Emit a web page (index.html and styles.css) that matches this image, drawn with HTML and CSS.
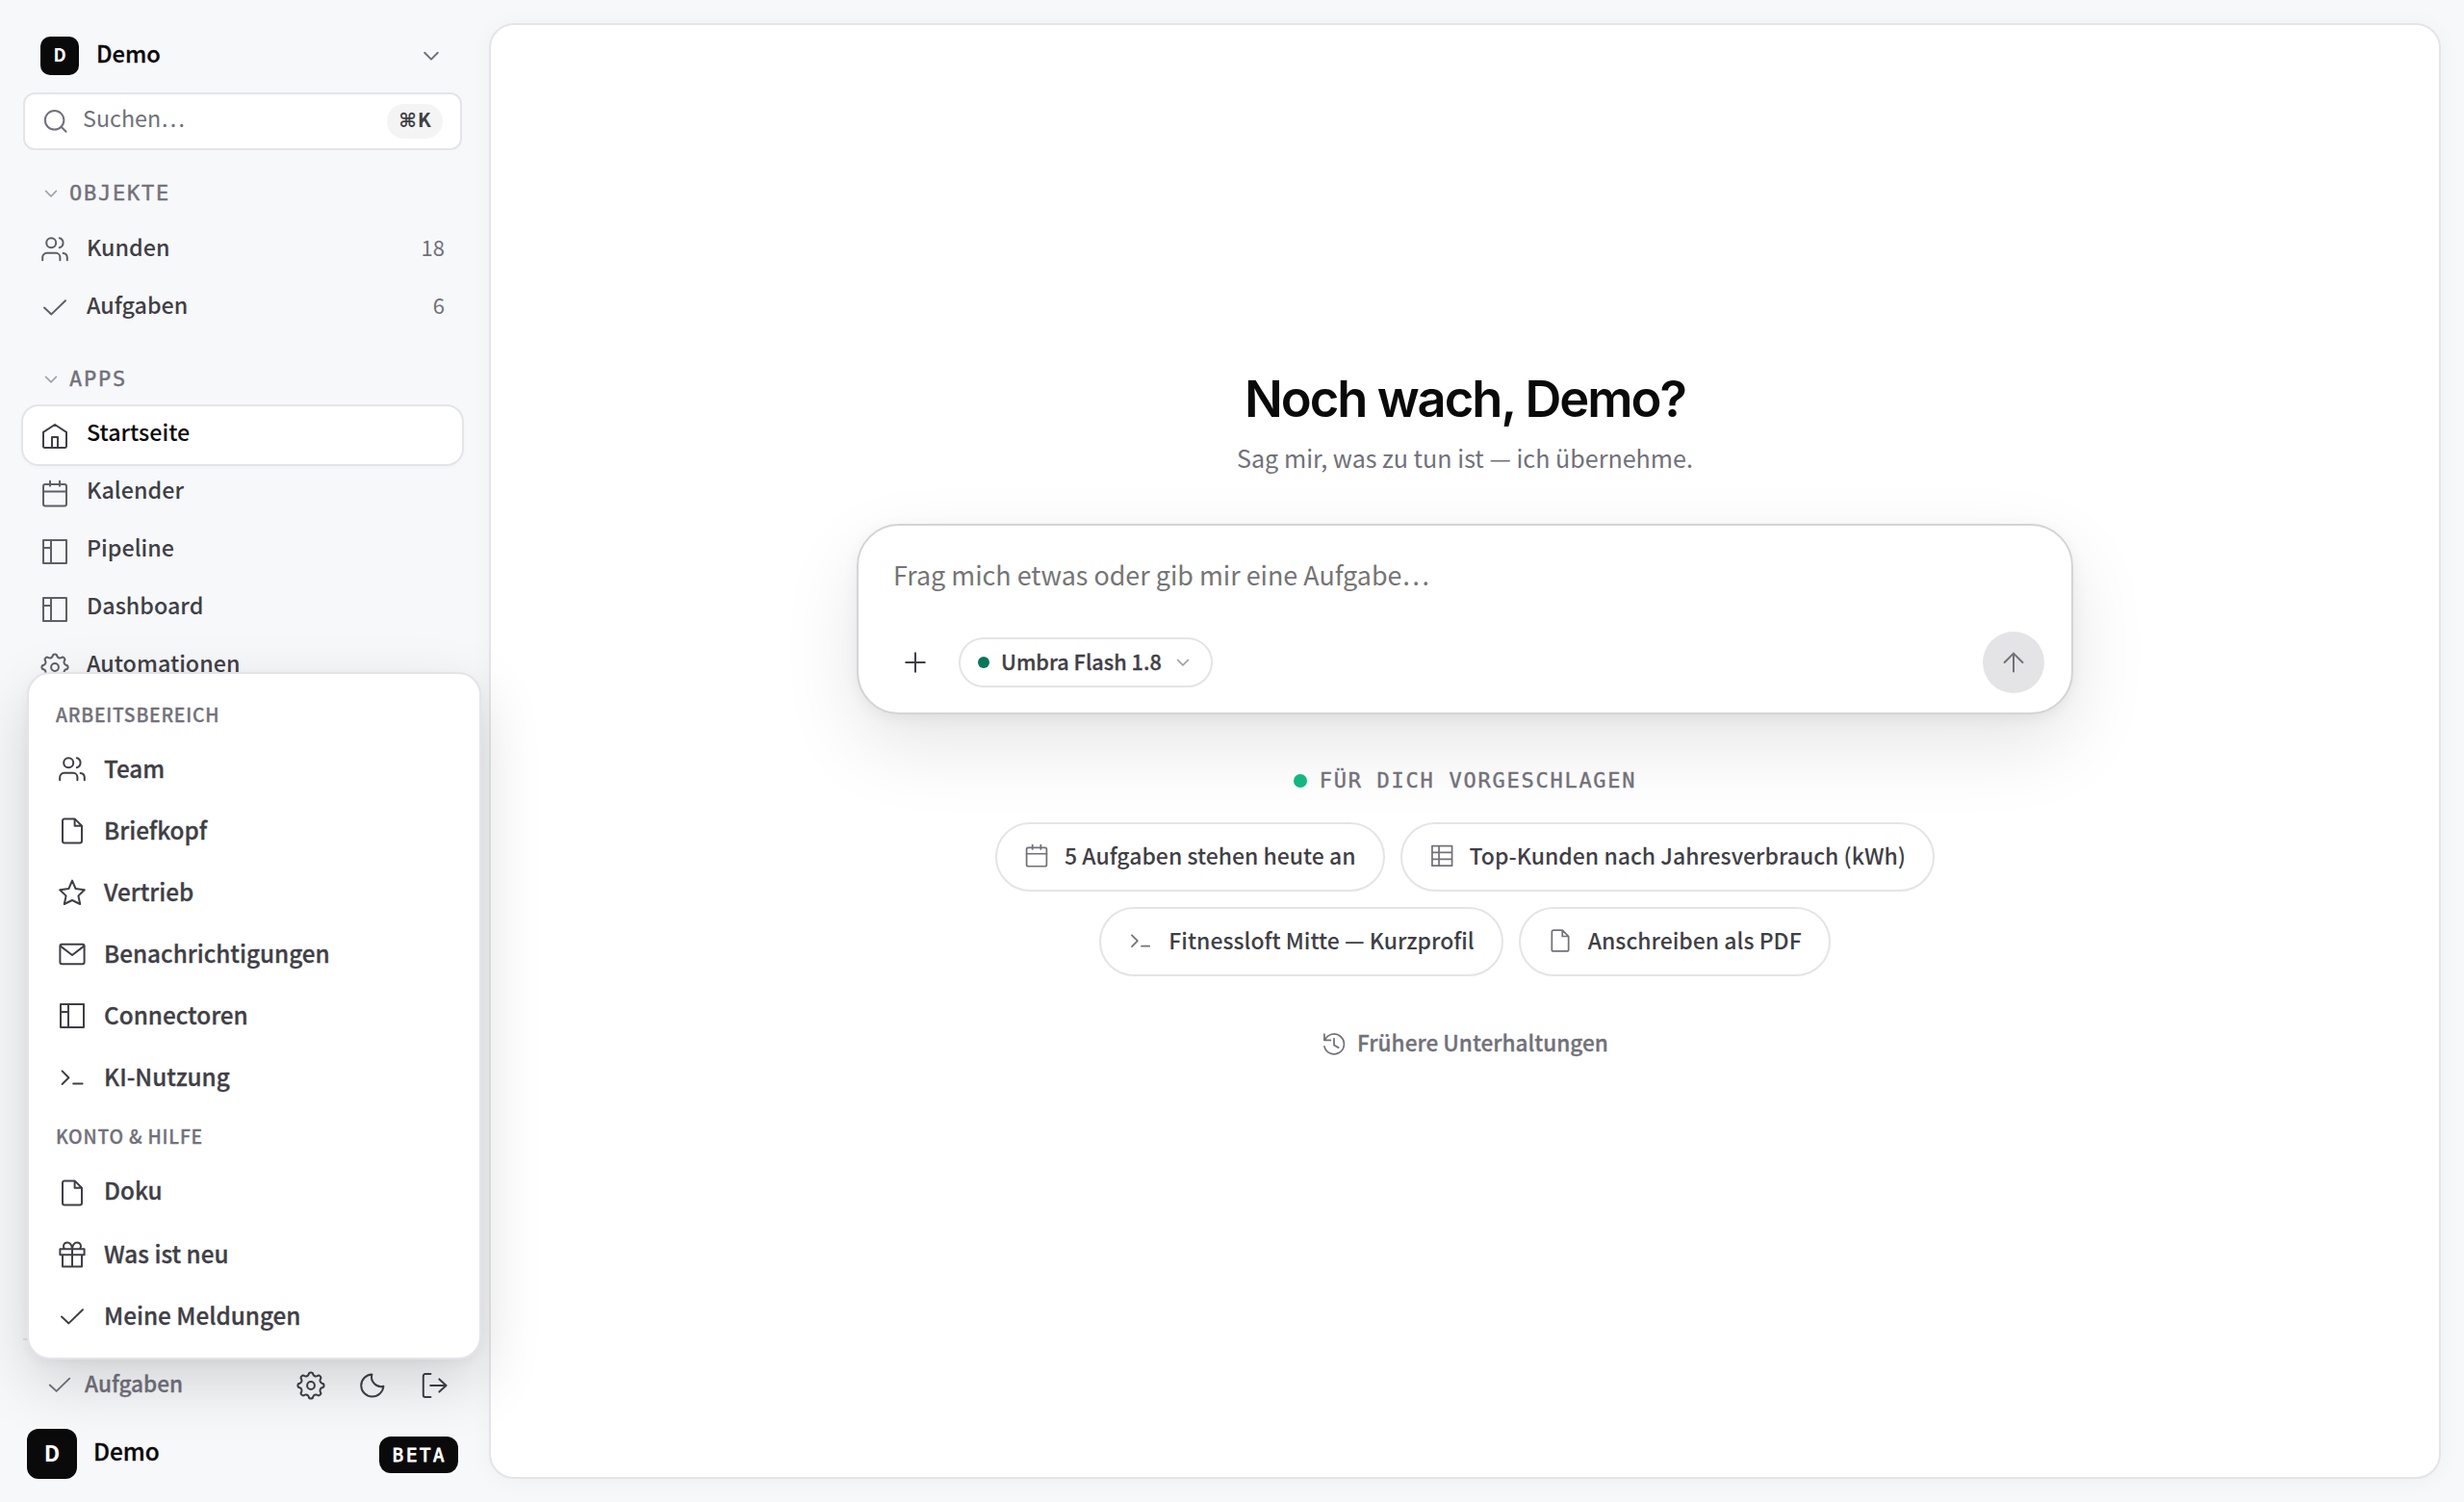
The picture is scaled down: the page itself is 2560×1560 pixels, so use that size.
FILE: index.html
```
<!DOCTYPE html>
<html lang="de">
<head>
  <meta charset="UTF-8">
  <meta name="viewport" content="width=device-width, initial-scale=1.0">
  <title>Demo – Startseite</title>
  <link rel="stylesheet" href="styles.css">
</head>
<body>
  <!-- Icon sprite, 15px grid -->
  <svg class="sprite" aria-hidden="true">
    <symbol id="i-chevron" viewBox="0 0 15 15"><path d="M4.1 5.9l3.4 3.4 3.4-3.4"/></symbol>
    <symbol id="i-search" viewBox="0 0 15 15"><circle cx="7.3" cy="6.9" r="4.9"/><path d="M10.8 10.4l2.5 2.5"/></symbol>
    <symbol id="i-users" viewBox="0 0 15 15"><circle cx="5.6" cy="4.1" r="2.5"/><path d="M1.1 13.1v-1.5a2.2 2.2 0 012.2-2.2h4.7a2.2 2.2 0 012.2 2.2v1.5M9.9 1.6a2.6 2.6 0 010 5M11.8 9.5a2.3 2.3 0 012.1 2.2v1.4"/></symbol>
    <symbol id="i-check" viewBox="0 0 15 15"><path d="M2 7.8l3.7 3.4L13 4.1"/></symbol>
    <symbol id="i-home" viewBox="0 0 15 15"><path d="M1.5 12.8V5.4l6-3.9 6 3.9v7.4a.7.7 0 01-.7.7H2.2a.7.7 0 01-.7-.7zM6 13.5V8h3v5.5"/></symbol>
    <symbol id="i-calendar" viewBox="0 0 15 15"><rect x="1.5" y="2.5" width="12" height="11.2" rx="1"/><path d="M1.5 6.2h12M5 .9v2.5M10 .9v2.5"/></symbol>
    <symbol id="i-layout" viewBox="0 0 15 15"><path d="M1.5 1.5h12v12h-12zM5.5 1.5v12M1.5 5.5h4"/></symbol>
    <symbol id="i-gear" viewBox="0 0 15 15"><circle cx="7.5" cy="7.5" r="1.95"/><path d="M6.35 1.71A1.16 1.16 0 018.65 1.71 1.5 1.5 0 0010.78 2.59 1.16 1.16 0 0112.41 4.22 1.5 1.5 0 0013.29 6.35 1.16 1.16 0 0113.29 8.65 1.5 1.5 0 0012.41 10.78 1.16 1.16 0 0110.78 12.41 1.5 1.5 0 008.65 13.29 1.16 1.16 0 016.35 13.29 1.5 1.5 0 004.22 12.41 1.16 1.16 0 012.59 10.78 1.5 1.5 0 001.71 8.65 1.16 1.16 0 011.71 6.35 1.5 1.5 0 002.59 4.22 1.16 1.16 0 014.22 2.59 1.5 1.5 0 006.35 1.71z"/></symbol>
    <symbol id="i-file" viewBox="0 0 15 15"><path d="M8.8 1.2H3.5a1 1 0 00-1 1v10.6a1 1 0 001 1h8a1 1 0 001-1V4.9zM8.8 1.2v3.7h3.7"/></symbol>
    <symbol id="i-star" viewBox="0 0 15 15"><path d="M7.5 1.3l1.8 4.2 4.6.6-3.2 3.1.9 4.3-4.1-2-4.1 2 .9-4.3-3.2-3.1 4.6-.6z"/></symbol>
    <symbol id="i-mail" viewBox="0 0 15 15"><rect x="1.2" y="2.4" width="12.6" height="10.2" rx="1"/><path d="M1.4 3.3l6.1 4.7 6.1-4.7"/></symbol>
    <symbol id="i-terminal" viewBox="0 0 15 15"><path d="M2.3 4.2l3.4 3.4-3.4 3.4M8.1 10.8h4.7"/></symbol>
    <symbol id="i-gift" viewBox="0 0 15 15"><path d="M1.2 4.6h12.6v3H1.2zM2.5 7.6h10v6.2h-10zM7.5 4.6v9.2M7.5 4.6C7.3 2.5 6.3 1.2 4.9 1.2c-1.7 0-2.5 1.9-1.4 3.4M7.5 4.6c.2-2.1 1.2-3.4 2.6-3.4 1.7 0 2.5 1.9 1.4 3.4"/></symbol>
    <symbol id="i-moon" viewBox="0 0 15 15"><path d="M7.2 1.7A5.8 5.8 0 1013.2 7.9 5 5 0 017.2 1.7z"/></symbol>
    <symbol id="i-logout" viewBox="0 0 15 15"><path d="M5.7 1.5H2.9a1 1 0 00-1 1v10a1 1 0 001 1h2.8M5.6 7.5h8.2M10.2 4.2l3.6 3.3-3.6 3.3"/></symbol>
    <symbol id="i-plus" viewBox="0 0 15 15"><path d="M7.5 2.6v9.8M2.6 7.5h9.8"/></symbol>
    <symbol id="i-arrow-up" viewBox="0 0 15 15"><path d="M7.5 12.3V2.8M2.8 7.5l4.7-4.7 4.7 4.7"/></symbol>
    <symbol id="i-table" viewBox="0 0 15 15"><path d="M1.7 1.5h11.9v11.9H1.7zM1.7 5.4h11.9M1.7 9.4h11.9M5.8 1.5v11.9"/></symbol>
    <symbol id="i-history" viewBox="0 0 15 15"><path d="M1.7 1.2v3.6h3.7M2 4.8A6 6 0 111.7 8.6M7.5 3.8v4l2.7 1.5"/></symbol>
  </svg>

  <div class="app">
    <aside class="sidebar">
      <div class="workspace">
        <span class="avatar avatar-sm"><span>D</span></span>
        <span class="workspace-name">Demo</span>
        <svg class="icon"><use href="#i-chevron"/></svg>
      </div>

      <div class="search">
        <svg class="icon"><use href="#i-search"/></svg>
        <span class="search-text">Suchen…</span>
        <kbd class="kbd"><span class="cmd">⌘</span><span class="key">K</span></kbd>
      </div>

      <nav class="nav">
        <div class="section-label section-objects">
          <svg class="icon icon-chev"><use href="#i-chevron"/></svg>OBJEKTE
        </div>
        <div class="objects">
          <a class="nav-item"><svg class="icon"><use href="#i-users"/></svg><span class="nav-text">Kunden</span><span class="count">18</span></a>
          <a class="nav-item"><svg class="icon"><use href="#i-check"/></svg><span class="nav-text">Aufgaben</span><span class="count">6</span></a>
        </div>

        <div class="section-label">
          <svg class="icon icon-chev"><use href="#i-chevron"/></svg>APPS
        </div>
        <div class="apps">
          <a class="nav-item active"><svg class="icon"><use href="#i-home"/></svg><span class="nav-text">Startseite</span></a>
          <a class="nav-item"><svg class="icon"><use href="#i-calendar"/></svg><span class="nav-text">Kalender</span></a>
          <a class="nav-item"><svg class="icon"><use href="#i-layout"/></svg><span class="nav-text">Pipeline</span></a>
          <a class="nav-item"><svg class="icon"><use href="#i-layout"/></svg><span class="nav-text">Dashboard</span></a>
          <a class="nav-item"><svg class="icon"><use href="#i-gear"/></svg><span class="nav-text">Automationen</span></a>
        </div>
      </nav>

      <div class="tools">
        <svg class="icon icon-tasks"><use href="#i-check"/></svg>
        <span class="tools-text">Aufgaben</span>
        <svg class="icon"><use href="#i-gear"/></svg>
        <svg class="icon"><use href="#i-moon"/></svg>
        <svg class="icon"><use href="#i-logout"/></svg>
      </div>
      <div class="account">
        <span class="avatar avatar-lg"><span>D</span></span>
        <span class="account-name">Demo</span>
        <span class="beta">BETA</span>
      </div>

      <div class="menu">
        <div class="menu-label menu-label-first">ARBEITSBEREICH</div>
        <a class="menu-item"><svg class="icon"><use href="#i-users"/></svg><span>Team</span></a>
        <a class="menu-item"><svg class="icon"><use href="#i-file"/></svg><span>Briefkopf</span></a>
        <a class="menu-item"><svg class="icon"><use href="#i-star"/></svg><span>Vertrieb</span></a>
        <a class="menu-item"><svg class="icon"><use href="#i-mail"/></svg><span>Benachrichtigungen</span></a>
        <a class="menu-item"><svg class="icon"><use href="#i-layout"/></svg><span>Connectoren</span></a>
        <a class="menu-item"><svg class="icon"><use href="#i-terminal"/></svg><span>KI-Nutzung</span></a>
        <div class="menu-label">KONTO &amp; HILFE</div>
        <a class="menu-item menu-item-link"><svg class="icon"><use href="#i-file"/></svg><span>Doku</span></a>
        <a class="menu-item"><svg class="icon"><use href="#i-gift"/></svg><span>Was ist neu</span></a>
        <a class="menu-item"><svg class="icon"><use href="#i-check"/></svg><span>Meine Meldungen</span></a>
      </div>
    </aside>

    <main class="panel">
      <h1 class="greeting">Noch wach, Demo?</h1>
      <p class="subtitle">Sag mir, was zu tun ist — ich übernehme.</p>

      <div class="composer">
        <div class="placeholder">Frag mich etwas oder gib mir eine Aufgabe…</div>
        <div class="toolbar">
          <svg class="icon"><use href="#i-plus"/></svg>
          <div class="model">
            <span class="model-dot"></span>
            <span class="model-name">Umbra Flash 1.8</span>
            <svg class="icon icon-chev"><use href="#i-chevron"/></svg>
          </div>
          <button class="send"><svg class="icon"><use href="#i-arrow-up"/></svg></button>
        </div>
      </div>

      <div class="suggest-label"><span class="suggest-dot"></span>FÜR DICH VORGESCHLAGEN</div>
      <div class="chips">
        <a class="chip"><svg class="icon"><use href="#i-calendar"/></svg><span>5 Aufgaben stehen heute an</span></a>
        <a class="chip"><svg class="icon"><use href="#i-table"/></svg><span>Top-Kunden nach Jahresverbrauch (kWh)</span></a>
        <a class="chip"><svg class="icon"><use href="#i-terminal"/></svg><span>Fitnessloft Mitte — Kurzprofil</span></a>
        <a class="chip"><svg class="icon"><use href="#i-file"/></svg><span>Anschreiben als PDF</span></a>
      </div>
      <div class="history"><svg class="icon"><use href="#i-history"/></svg><span>Frühere Unterhaltungen</span></div>
    </main>
  </div>
</body>
</html>
```
FILE: styles.css
```
* {
  box-sizing: border-box;
}
body {
  margin: 0;
  background: #f7f8fa;
  color: #3f3f46;
  font-family: "Noto Sans CJK SC", "Noto Sans", sans-serif;
  font-size: 23.3px;
  font-weight: 500;
  line-height: 36px;
}
.sprite {
  position: absolute;
  width: 0;
  height: 0;
}
.icon {
  width: 30px;
  height: 30px;
  flex: none;
  fill: none;
  stroke: currentColor;
  stroke-width: 1;
  stroke-linecap: round;
  stroke-linejoin: round;
}
.icon-chev {
  width: 24px;
  height: 24px;
  color: #a1a1aa;
}
.app {
  display: flex;
  width: 2560px;
  height: 1560px;
  overflow: hidden;
}

/* Sidebar */
.sidebar {
  position: relative;
  z-index: 1;
  display: flex;
  flex-direction: column;
  width: 508px;
  padding: 24px 28px 24px 24px;
}
.workspace {
  display: flex;
  align-items: center;
  height: 68px;
  margin-bottom: 4px;
  padding: 0 17px 0 18px;
  color: #71717a;
}
.workspace-name {
  flex: 1;
  margin-left: 18px;
  padding-bottom: 7px;
  color: #0a0a0a;
  font-size: 23.7px;
  -webkit-text-stroke: 0.3px;
}
.avatar {
  display: flex;
  align-items: center;
  justify-content: center;
  flex: none;
  background: #0a0a0a;
  color: #fff;
  font-weight: 700;
}
.avatar span {
  padding-bottom: 4px;
}
.avatar-sm {
  width: 40px;
  height: 40px;
  border-radius: 10px;
  font-size: 18.5px;
}
.avatar-lg {
  width: 52px;
  height: 52px;
  border-radius: 12px;
  font-size: 23px;
}
.search {
  display: flex;
  align-items: center;
  height: 60px;
  padding: 0 18px 0 16px;
  background: #fff;
  border: 2px solid #e4e4e9;
  border-radius: 12px;
  color: #71717a;
}
.search-text {
  flex: 1;
  margin-left: 14px;
  padding-bottom: 8px;
  font-size: 23.3px;
  font-weight: 400;
}
.kbd {
  display: flex;
  align-items: center;
  justify-content: center;
  width: 58px;
  height: 36px;
  background: #f4f4f5;
  border-radius: 18px;
  color: #3f3f46;
  font-family: inherit;
  font-size: 20px;
  font-weight: 700;
}
.cmd {
  font-family: "DejaVu Sans", sans-serif;
  font-size: 20px;
  padding-bottom: 3px;
}
.key {
  margin-left: 1px;
  padding-bottom: 5px;
}
.nav {
  flex: 1;
  min-height: 0;
}
.section-label {
  display: flex;
  align-items: center;
  gap: 7px;
  height: 56px;
  margin-top: 16px;
  padding-left: 17px;
  color: #71717a;
  font-family: "DejaVu Sans Mono", monospace;
  font-size: 22px;
  font-weight: 400;
  letter-spacing: 1.76px;
  -webkit-text-stroke: 0.4px;
}
.section-objects {
  height: 58px;
}
.nav-item {
  display: flex;
  align-items: center;
  height: 60px;
  padding: 0 18px;
}
.nav-item .icon {
  color: #5f5f67;
}
.objects .icon {
  margin-top: -2px;
}
.apps .icon {
  margin-top: 2px;
}
.nav-text {
  flex: 1;
  margin-left: 18px;
  padding-bottom: 8px;
}
.count {
  padding-bottom: 8px;
  color: #71717a;
  font-size: 22px;
  font-weight: 400;
}
.nav-item.active {
  background: #fff;
  border-radius: 16px;
  box-shadow: 0 0 0 2px #e4e4e9, 0 2px 6px rgba(0, 0, 0, 0.04);
  color: #0a0a0a;
}
.nav-item.active .icon {
  color: #3f3f46;
}
.tools {
  display: flex;
  align-items: center;
  gap: 34px;
  height: 94px;
  padding: 2px 14px 0 24px;
  border-top: 2px solid #e4e4e9;
}
.icon-tasks {
  width: 28px;
  height: 28px;
  margin: -3px -22px 0 0;
  color: #71717a;
}
.tools-text {
  flex: 1;
  padding-bottom: 4px;
  color: #71717a;
  font-size: 22.6px;
  -webkit-text-stroke: 0.3px;
}
.account {
  display: flex;
  align-items: center;
  height: 52px;
  padding: 0 4px;
}
.account-name {
  flex: 1;
  margin-left: 17px;
  padding-bottom: 6px;
  color: #0a0a0a;
  font-size: 24.4px;
  -webkit-text-stroke: 0.3px;
}
.beta {
  height: 38px;
  margin-top: 2px;
  padding: 0 12px 0 14px;
  background: #0a0a0a;
  border-radius: 12px;
  color: #fff;
  font-family: "DejaVu Sans Mono", monospace;
  font-size: 19px;
  font-weight: 400;
  line-height: 38px;
  letter-spacing: 2.6px;
  -webkit-text-stroke: 0.8px;
}

/* Popup over the lower sidebar */
.menu {
  position: absolute;
  left: 28px;
  bottom: 148px;
  width: 472px;
  padding: 11px 0;
  background: #fff;
  border: 2px solid #e4e4e9;
  border-radius: 24px;
  box-shadow: 0 24px 64px rgba(0, 0, 0, 0.15), 0 4px 12px rgba(0, 0, 0, 0.04);
}
.menu-label {
  height: 56px;
  padding-left: 28px;
  color: #71717a;
  font-size: 19.3px;
  line-height: 59px;
  letter-spacing: 0.8px;
  -webkit-text-stroke: 0.3px;
}
.menu-label-first {
  line-height: 63px;
}
.menu-item {
  display: flex;
  align-items: center;
  gap: 18px;
  height: 64px;
  padding-left: 30px;
  font-size: 24.3px;
  -webkit-text-stroke: 0.3px;
}
.menu-item span {
  padding-bottom: 2px;
}
.menu-item-link span {
  padding-bottom: 6px;
}

/* Main panel */
.panel {
  display: flex;
  flex-direction: column;
  align-items: center;
  width: 2028px;
  height: 1512px;
  margin-top: 24px;
  padding-top: 358px;
  background: #fff;
  border: 2px solid #e4e4e9;
  border-radius: 26px;
  box-shadow: 0 2px 24px rgba(0, 0, 0, 0.04);
}
.greeting {
  margin: 0;
  color: #0a0a0a;
  font-family: Inter, sans-serif;
  font-size: 52.5px;
  font-weight: 600;
  line-height: 60px;
  letter-spacing: -2px;
}
.subtitle {
  margin: 13px 0 51px;
  color: #71717a;
  font-size: 25.1px;
  font-weight: 400;
}
.composer {
  display: flex;
  flex-direction: column;
  justify-content: space-between;
  width: 1264px;
  height: 198px;
  padding: 31px 28px 20px 36px;
  background: #fff;
  border: 2px solid #d4d4d8;
  border-radius: 44px;
  box-shadow: 0 32px 80px rgba(0, 0, 0, 0.1), 0 4px 16px rgba(0, 0, 0, 0.06);
}
.placeholder {
  color: #757575;
  font-size: 26.9px;
  font-weight: 400;
  line-height: 40px;
}
.toolbar {
  display: flex;
  align-items: center;
  padding-left: 8px;
}
.model {
  display: flex;
  align-items: center;
  height: 52px;
  margin-left: 30px;
  padding: 0 17px 0 18px;
  border: 2px solid #e4e4e9;
  border-radius: 26px;
}
.model-dot {
  width: 12px;
  height: 12px;
  background: #047857;
  border-radius: 50%;
}
.model-name {
  margin: 0 10px 0 12px;
  padding-bottom: 3px;
  font-size: 21.7px;
  -webkit-text-stroke: 0.3px;
}
.send {
  display: flex;
  align-items: center;
  justify-content: center;
  width: 64px;
  height: 64px;
  margin-left: auto;
  padding: 0;
  background: #e4e4e6;
  border: 0;
  border-radius: 50%;
  color: #71717a;
}
.suggest-label {
  display: flex;
  align-items: center;
  gap: 13px;
  height: 30px;
  margin-top: 54px;
  color: #71717a;
  font-family: "DejaVu Sans Mono", monospace;
  font-size: 22px;
  font-weight: 400;
  letter-spacing: 1.74px;
  -webkit-text-stroke: 0.4px;
}
.suggest-dot {
  width: 14px;
  height: 14px;
  background: #10b981;
  border-radius: 50%;
}
.chips {
  display: flex;
  flex-wrap: wrap;
  justify-content: center;
  gap: 16px;
  width: 1264px;
  margin-top: 28px;
}
.chip {
  display: flex;
  align-items: center;
  gap: 16px;
  height: 72px;
  padding: 0 28px;
  background: #fff;
  border: 2px solid #e4e4e9;
  border-radius: 36px;
  font-size: 23px;
}
.chip span {
  padding-bottom: 4px;
}
.chip .icon {
  width: 26px;
  height: 26px;
  margin-top: -2px;
  color: #71717a;
}
.history {
  display: flex;
  align-items: center;
  gap: 11px;
  height: 40px;
  margin-top: 51px;
  color: #71717a;
  font-size: 22.6px;
  -webkit-text-stroke: 0.3px;
}
.history .icon {
  width: 26px;
  height: 26px;
}
.history span {
  padding-bottom: 5px;
}
```
